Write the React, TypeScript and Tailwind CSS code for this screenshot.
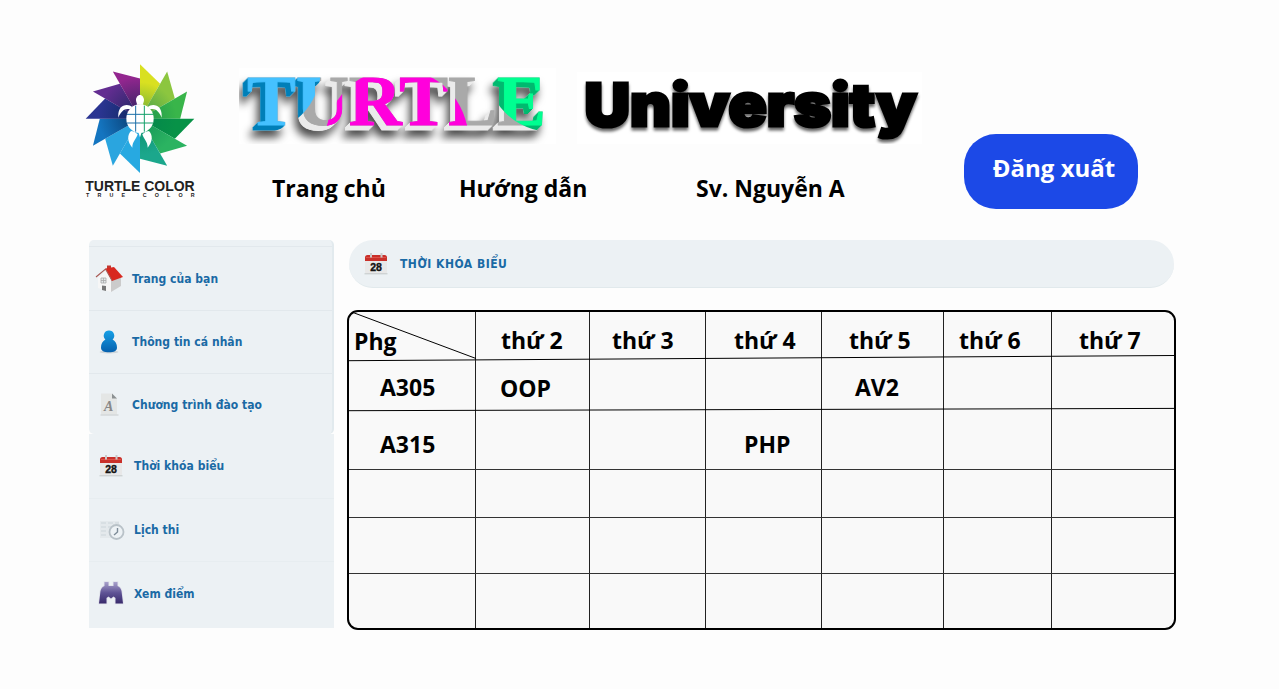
import React from "react";

const petals = [
  "#d9e021", "#8cc63f", "#39b54a", "#079247", "#2bb361", "#1ba78c",
  "#27a9e1", "#2aa5df", "#1475c0", "#2b3592", "#632d91", "#93268f",
];

function LogoMark() {
  const R = 163;
  const pt = (k: number, r: number) => {
    const a = (k * Math.PI) / 6;
    return `${(195 + r * Math.sin(a)).toFixed(1)},${(191 - r * Math.cos(a)).toFixed(1)}`;
  };
  return (
    <svg className="block h-[136px] w-[114px]" viewBox="27 27 342 408">
      <defs>
        <radialGradient id="shade" gradientUnits="userSpaceOnUse" cx="190" cy="185" r="120">
          <stop offset="0.2" stopColor="#04244f" stopOpacity="0.6" />
          <stop offset="1" stopColor="#04244f" stopOpacity="0" />
        </radialGradient>
        <radialGradient id="shadeSoft" gradientUnits="userSpaceOnUse" cx="195" cy="191" r="110">
          <stop offset="0.2" stopColor="#007a50" stopOpacity="0.45" />
          <stop offset="1" stopColor="#007a50" stopOpacity="0" />
        </radialGradient>
      </defs>
      {petals.map((c, k) => {
        const points = `195,191 ${pt(k, R)} ${pt(k + 1, R * 0.74)}`;
        return (
          <g key={c}>
            <polygon points={points} fill={c} />
            <polygon points={points} fill={k > 7 ? "url(#shade)" : k < 6 ? "url(#shadeSoft)" : "none"} />
          </g>
        );
      })}
      <g fill="#fff">
        <path d="M195 120c-7 0-12 8-12 15 0 6 3 9 3 14h18c0-5 3-8 3-14 0-7-5-15-12-15z" />
        <ellipse cx="195" cy="191" rx="41" ry="43" />
        <path d="M130 188c-1-18 3-31 15-36 10-4 20-2 27 5l-7 6c-15-5-28 6-35 25z" />
        <path d="M260 188c1-18-3-31-15-36-10-4-20-2-27 5l7 6c15-5 28 6 35 25z" />
        <path d="M168 228c-13 13-10 34 4 50 0-18 12-26 16-40l-10-8z" />
        <path d="M222 228c13 13 10 34-4 50 0-18-12-26-16-40l10-8z" />
        <path d="M190 232h10l-5 15z" />
      </g>
      <g fill="none" stroke="#1b6fa8" strokeWidth="3">
        <path d="M182 152v78M156 178h39M156 204h39" />
        <path d="M208 152v78M195 178h39M195 204h39" stroke="#14a06a" />
      </g>
      <text x="31" y="409" fontFamily="Liberation Sans, Arial, sans-serif" fontWeight="700" fontSize="43" fill="#222" textLength="328" lengthAdjust="spacingAndGlyphs">TURTLE COLOR</text>
      <text x="33" y="427" fontFamily="Liberation Sans, Arial, sans-serif" fontWeight="700" fontSize="16" fill="#222" textLength="326">TRUE COLOR</text>
    </svg>
  );
}

function Turtle({ fill, ...rest }: { fill: string } & React.SVGProps<SVGTextElement>) {
  return (
    <text x="8" y="57" fontFamily="Liberation Serif, Times New Roman, serif" fontWeight="700" fontSize="71" textLength="299" lengthAdjust="spacingAndGlyphs" fill={fill} stroke={fill} strokeWidth="0.9" {...rest}>
      TURTLE
    </text>
  );
}

function ExtrudeFilter({ id, side }: { id: string; side: string }) {
  return (
    <filter id={id} x="-5%" y="-10%" width="110%" height="130%" colorInterpolationFilters="sRGB">
      <feOffset in="SourceAlpha" dx="-1" dy="1" result="a" />
      <feOffset in="SourceAlpha" dx="-2" dy="2" result="b" />
      <feOffset in="SourceAlpha" dx="-3" dy="3" result="c" />
      <feOffset in="SourceAlpha" dx="-4" dy="4" result="d" />
      <feOffset in="SourceAlpha" dx="-5" dy="5" result="e" />
      <feMerge result="body">
        <feMergeNode in="a" />
        <feMergeNode in="b" />
        <feMergeNode in="c" />
        <feMergeNode in="d" />
        <feMergeNode in="e" />
      </feMerge>
      <feFlood floodColor={side} />
      <feComposite in2="body" operator="in" result="sides" />
      <feMerge>
        <feMergeNode in="sides" />
        <feMergeNode in="SourceGraphic" />
      </feMerge>
    </filter>
  );
}

function TurtleWordmark() {
  return (
    <svg className="block h-[76px] w-[317px] bg-white" viewBox="0 0 317 76">
      <defs>
        <filter id="soft" x="-10%" y="-20%" width="120%" height="160%" colorInterpolationFilters="sRGB">
          <feDropShadow dx="-3" dy="7" stdDeviation="4" floodColor="#000" floodOpacity="0.7" />
        </filter>
        <ExtrudeFilter id="greySides" side="#ebebeb" />
        <ExtrudeFilter id="blueSides" side="#007fb8" />
        <ExtrudeFilter id="greenSides" side="#00b96f" />
        <clipPath id="blueDisc"><circle cx="16" cy="0" r="66" /></clipPath>
        <clipPath id="pinkDisc"><circle cx="158" cy="72" r="71.5" /></clipPath>
        <clipPath id="greenDisc"><circle cx="313" cy="-2" r="66" /></clipPath>
      </defs>
      <g filter="url(#soft)">
        <g filter="url(#greySides)"><Turtle fill="#a9a9a9" /></g>
      </g>
      <g clipPath="url(#pinkDisc)"><Turtle fill="#ff00dc" /></g>
      <g clipPath="url(#blueDisc)"><g filter="url(#blueSides)"><Turtle fill="#45c1ff" /></g></g>
      <g clipPath="url(#greenDisc)"><g filter="url(#greenSides)"><Turtle fill="#00ff91" /></g></g>
    </svg>
  );
}

function UniversityWordmark() {
  return (
    <svg className="block h-[72px] w-[345px] bg-white" viewBox="0 0 345 72">
      <defs>
        <filter id="drop" x="-5%" y="-20%" width="110%" height="150%">
          <feDropShadow dx="0" dy="3" stdDeviation="1.4" floodColor="#000" floodOpacity="0.6" />
        </filter>
      </defs>
      <text x="7.500" y="54" fontFamily="Inter, Arial, sans-serif" fontWeight="900" fontSize="59" textLength="332" lengthAdjust="spacingAndGlyphs" fill="#000" stroke="#000" strokeWidth="3.200" filter="url(#drop)">
        University
      </text>
    </svg>
  );
}

function HouseIcon() {
  return (
    <svg className="h-8 w-8" viewBox="0 0 32 32">
      <path d="M5 15 13 8l8 10-3 11L5 25z" fill="#f6f6f6" />
      <path d="m18 17 10-3v9l-10 6z" fill="#cbcbcb" />
      <path d="M14 2.500h4V8h-4z" fill="#c2382f" />
      <path d="M12.500 5.500 21 4l9 10-11 4z" fill="#d8281f" />
      <path d="M3 14 12.500 6 19 17.500" fill="none" stroke="#a85852" strokeWidth="1.100" />
      <path d="M8 15h5v5H8zM10.500 15v5M8 17.500h5" fill="#e3e8ea" stroke="#a9a9a9" strokeWidth="0.800" />
      <path d="M9 22.500 13 23v5l-4-1z" fill="#777" />
    </svg>
  );
}

function PersonIcon() {
  return (
    <svg className="h-8 w-8" viewBox="0 0 32 32">
      <defs>
        <linearGradient id="person" x1="0" y1="0" x2="0" y2="1">
          <stop offset="0" stopColor="#17a0e6" />
          <stop offset="1" stopColor="#0560ae" />
        </linearGradient>
      </defs>
      <ellipse cx="16" cy="26" rx="9.500" ry="1.500" fill="#cdd5da" />
      <path d="M16 4.500a5.200 5.200 0 0 0-3.600 9C9.500 15 8 18 8 21.500c0 3.300 3 4.800 8 4.800s8-1.500 8-4.800c0-3.500-1.500-6.500-4.400-8A5.200 5.200 0 0 0 16 4.500z" fill="url(#person)" />
    </svg>
  );
}

function PageIcon() {
  return (
    <svg className="h-8 w-8" viewBox="0 0 32 32">
      <path d="M8 4.500H19l5 5v16H8z" fill="#e4e6e5" />
      <path d="M19 4.500v5h5z" fill="#8b9092" />
      <path d="M7.500 26h18" stroke="#c8cccc" />
      <text x="11" y="22" fontFamily="Liberation Serif, serif" fontStyle="italic" fontWeight="700" fontSize="14" fill="#888">A</text>
    </svg>
  );
}

function CalendarIcon() {
  return (
    <svg className="h-8 w-8" viewBox="0 0 32 32">
      <path d="M5 12h22v12q0 1.500-1.500 1.500h-19Q5 25.500 5 24z" fill="#e8e8e8" />
      <path d="M4.500 25.800h23" stroke="#c4c8c8" />
      <path d="M5 13V9.500Q5 7 7.500 7h17Q27 7 27 9.500V13z" fill="#c9302a" />
      <path d="M6 9.500h20" stroke="#de5148" />
      <path d="M11 5V9.500M21.500 5V9.500" stroke="#c9c9c9" strokeWidth="2" />
      <text x="16" y="22.500" textAnchor="middle" fontFamily="Liberation Sans, sans-serif" fontWeight="700" fontSize="10.500" fill="#151515" stroke="#151515" strokeWidth="0.400">28</text>
    </svg>
  );
}

function ScheduleIcon() {
  return (
    <svg className="h-8 w-8" viewBox="0 0 32 32">
      <path d="M5 7h19v14l-6 3H5z" fill="#e4e9ec" />
      <path d="M6 9h5M13 9h5M20 9h4M6 13h5M13 13h5M6 17h5M6 21h5" stroke="#d3dbe0" strokeWidth="1.600" />
      <circle cx="21.500" cy="18" r="7" fill="#edf2f5" stroke="#b9c2c8" strokeWidth="1.800" />
      <path d="M22.500 14v4l-3.500 3" fill="none" stroke="#7c8b97" strokeWidth="1.400" />
    </svg>
  );
}

function BinocularsIcon() {
  return (
    <svg className="h-8 w-8" viewBox="0 0 32 32">
      <defs>
        <linearGradient id="lens" x1="0" y1="0" x2="0" y2="1">
          <stop offset="0" stopColor="#a9a2cc" />
          <stop offset="0.500" stopColor="#5f5395" />
          <stop offset="1" stopColor="#392b6c" />
        </linearGradient>
      </defs>
      <path d="M9.500 4h4v4h5V4h4v4q3 1 4 5l1.500 12.500h-7.500V20l-2-1.500-2.500 2-2.500-2-2 1.500v5.500H4L5.500 13q1-4 4-5z" fill="url(#lens)" stroke="#dedfe9" strokeWidth="1.500" paintOrder="stroke" />
    </svg>
  );
}

const menuFont = "font-['DejaVu_Sans_Condensed','DejaVu_Sans',sans-serif] text-[12px] font-bold text-[#1a6aa5]";

function MenuItem({ icon, label, className }: { icon: React.ReactNode; label: string; className: string }) {
  return (
    <li className={`flex items-center gap-[7px] ${className}`}>
      {icon}
      <span className={`${menuFont} tracking-[0.04px] whitespace-nowrap`}>{label}</span>
    </li>
  );
}

const columns = "grid grid-cols-[127px_114px_116px_116px_122px_108px_121px]";

type Cell = [text: string, pad: string];
const rows: { height: string; slope?: [number, number]; cells: Cell[] }[] = [
  {
    height: "h-[48px]", slope: [48.7, 43.5],
    cells: [["Phg", "pl-[5px] pt-[13px]"], ["thứ 2", "pl-[25px] pt-[12px]"], ["thứ 3", "pl-[22px] pt-[12px]"], ["thứ 4", "pl-[28px] pt-[12px]"], ["thứ 5", "pl-[27px] pt-[12px]"], ["thứ 6", "pl-[15px] pt-[12px]"], ["thứ 7", "pl-[27px] pt-[12px]"]],
  },
  {
    height: "h-[51px]", slope: [50.7, 48.4],
    cells: [["A305", "pl-[31px] pt-[11px]"], ["OOP", "pl-[24px] pt-[12px]"], ["", ""], ["", ""], ["AV2", "pl-[33px] pt-[11px]"], ["", ""], ["", ""]],
  },
  {
    height: "h-[59px] border-b border-[#333]",
    cells: [["A315", "pl-[31px] pt-[17px]"], ["", ""], ["", ""], ["PHP", "pl-[38px] pt-[17px]"], ["", ""], ["", ""], ["", ""]],
  },
  { height: "h-[48px] border-b border-[#333]", cells: Array(7).fill(["", ""]) },
  { height: "h-[56px] border-b border-[#333]", cells: Array(7).fill(["", ""]) },
  { height: "h-[54px]", cells: Array(7).fill(["", ""]) },
];

function Timetable() {
  return (
    <div className="mt-[22px] ml-[-2px] h-[320px] w-[829px] overflow-hidden rounded-[11px] border-2 border-black bg-[#f9f9f9]">
      {rows.map((row, r) => (
        <div key={r} className={`relative ${columns} ${row.height}`}>
          {row.cells.map(([text, pad], c) => (
            <div key={c} className={`whitespace-nowrap text-[23px] leading-[32px] ${c < 6 ? "border-r border-[#222]" : ""} ${pad}`}>
              {text}
            </div>
          ))}
          {row.slope && (
            <svg className="absolute top-0 left-0 h-[54px] w-[825px] overflow-visible" viewBox="0 0 825 54">
              <line x1="0" y1={row.slope[0]} x2="825" y2={row.slope[1]} stroke="#000" strokeWidth="1" />
              {r === 0 && <line x1="0" y1="-1" x2="127" y2="46.500" stroke="#000" strokeWidth="1" />}
            </svg>
          )}
        </div>
      ))}
    </div>
  );
}

export default function App() {
  return (
    <div className="h-[689px] w-[1279px] overflow-hidden bg-[#fdfdfd] font-['Open_Sans','Noto_Sans',sans-serif] font-bold text-black">
      <header className="flex h-[240px] pl-[84px]">
        <div className="pt-[64px]"><LogoMark /></div>
        <div className="w-[766px] pt-[68px] pl-[41px]">
          <div className="flex h-[104px] gap-[21px]">
            <TurtleWordmark />
            <div className="pt-[4px]"><UniversityWordmark /></div>
          </div>
          <nav className="flex pl-[33px] text-[23px] leading-[32px] whitespace-nowrap">
            <a className="w-[187px]">Trang chủ</a>
            <a className="w-[237px]">Hướng dẫn</a>
            <a>Sv. Nguyễn A</a>
          </nav>
        </div>
        <button className="mt-[134px] flex h-[75px] w-[174px] justify-center rounded-[32px] bg-[#1c49e7] pt-[18px] pl-[6px] text-[24px] leading-[32px] whitespace-nowrap text-white">
          Đăng xuất
        </button>
      </header>
      <main className="flex items-start pl-[89px]">
        <aside className="w-[245px] bg-[#ecf1f4]">
          <div className="bg-[#fdfdfd]">
            <ul className="h-[194px] rounded-[5px] border-r-2 border-[#e2eaee] bg-[#ecf1f4] pt-[6px]">
              <MenuItem icon={<HouseIcon />} label="Trang của bạn" className="h-[64px] border-t border-[#e2e8ec] pl-[4px]" />
              <MenuItem icon={<PersonIcon />} label="Thông tin cá nhân" className="h-[63px] border-t border-[#e2e8ec] pl-[4px]" />
              <MenuItem icon={<PageIcon />} label="Chương trình đào tạo" className="h-[63px] border-t border-[#e2e8ec] pl-[4px]" />
            </ul>
          </div>
          <ul className="h-[194px]">
            <MenuItem icon={<CalendarIcon />} label="Thời khóa biểu" className="h-[64px] pl-[6px]" />
            <MenuItem icon={<ScheduleIcon />} label="Lịch thi" className="h-[63px] border-t border-[#e7edf0] pl-[6px]" />
            <MenuItem icon={<BinocularsIcon />} label="Xem điểm" className="h-[64px] border-t border-[#e7edf0] pl-[6px]" />
          </ul>
        </aside>
        <section className="ml-[15px]">
          <h1 className="flex h-[48px] w-[825px] items-center gap-[8px] rounded-full border-b border-[#e1e9ec] bg-[#ecf1f4] pl-[11px]">
            <CalendarIcon />
            <span className={`${menuFont} tracking-[0.5px]`}>THỜI KHÓA BIỂU</span>
          </h1>
          <Timetable />
        </section>
      </main>
    </div>
  );
}
